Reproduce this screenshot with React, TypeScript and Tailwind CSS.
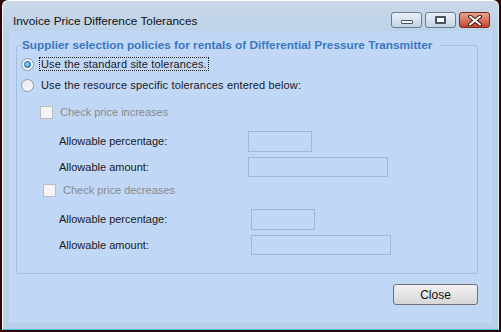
import React from 'react'

const font = { fontFamily: '"Liberation Sans", Arial, sans-serif' }

function Radio({ checked }: { checked?: boolean }) {
  return (
    <span className="flex h-[13px] w-[13px] items-center justify-center rounded-full border border-[#8e9bab] bg-gradient-to-br from-[#e8e8e8] to-[#fafafa]">
      {checked && (
        <span className="h-[7px] w-[7px] rounded-full border border-[#1b5fa6] bg-[radial-gradient(circle_at_40%_40%,#8fe0ff,#1c87d6)]" />
      )}
    </span>
  )
}

function Checkbox() {
  return <span className="block h-[13px] w-[13px] border border-[#bcbcbc] bg-[#f4f4f4]" />
}

function Field({ label, wide, shift }: { label: string; wide?: boolean; shift?: boolean }) {
  return (
    <div className="flex items-center">
      <span className="w-[231px] pl-[42px] text-[11px] text-[#1a1a1a]">{label}</span>
      <span
        className={
          'block border border-[#9abbe0] ' +
          (wide ? 'h-[20px] w-[140px]' : 'h-[21px] w-[64px]') +
          (shift ? ' ml-[3px]' : '')
        }
      />
    </div>
  )
}

export default function App() {
  return (
    <div className="h-[332px] w-[501px] bg-[#2d0707] px-[2px] pb-[2px]" style={font}>
      <div className="flex h-[330px] flex-col rounded-t-[6px] border-l border-r border-t border-b border-l-white border-r-[#e6eef8] border-t-white border-b-[#3fc6de] bg-gradient-to-b from-[#c9d8e8] to-[#b9d0ea] to-[40px]">
        {/* title bar */}
        <div className="flex h-[30px] items-start">
          <span className="ml-[10px] mt-[12px] text-[11.8px] leading-[16px] text-[#111]">
            Invoice Price Difference Tolerances
          </span>
          <div className="ml-auto mr-[8px] mt-[11px] flex gap-[3px]">
            <span className="flex h-[16px] w-[31px] items-end justify-center rounded-[3px] border border-[#6a7c93] bg-gradient-to-b from-[#e9f0f8] to-[#c3d3e6] pb-[3px]">
              <span className="block h-[4px] w-[12px] rounded-[1px] border border-[#46525e] bg-white" />
            </span>
            <span className="flex h-[16px] w-[31px] items-center justify-center rounded-[3px] border border-[#6a7c93] bg-gradient-to-b from-[#e9f0f8] to-[#c3d3e6]">
              <span className="block h-[8px] w-[11px] rounded-[1px] border-2 border-[#46525e] bg-white" />
            </span>
            <span className="flex h-[16px] w-[31px] items-center justify-center rounded-[3px] border border-[#7a2a1e] bg-gradient-to-b from-[#e8a493] to-[#c4412a]">
              <svg width="14" height="11" viewBox="0 0 14 11">
                <path d="M2 1.5 L12 9.5 M12 1.5 L2 9.5" stroke="#3b1a14" strokeWidth="4" strokeLinecap="round" />
                <path d="M2 1.5 L12 9.5 M12 1.5 L2 9.5" stroke="#fff" strokeWidth="2" strokeLinecap="round" />
              </svg>
            </span>
          </div>
        </div>

        {/* client area */}
        <div className="mx-[6px] mb-[6px] flex flex-1 flex-col bg-[#c1d7f6] pl-[7px] pr-[14px] pt-[6px]">
          <fieldset className="rounded-[3px] border border-[#a3c0e3] pb-[18px]">
            <legend className="ml-[5px] pr-[8px] text-[11.8px] font-bold leading-[16px] text-[#3b77bf]">
              Supplier selection policies for rentals of Differential Pressure Transmitter
            </legend>
            <div className="mt-[3px] flex flex-col text-[11px] text-[#1a1a1a]">
              <div className="flex h-[16px] items-center pl-[4px] tracking-[0.15px]">
                <Radio checked />
                <span className="ml-[5px] border border-dotted border-[#222] px-[1px] leading-[12px]">
                  Use the standard site tolerances.
                </span>
              </div>
              <div className="mt-[5px] flex h-[16px] items-center pl-[4px] tracking-[0.15px]">
                <Radio />
                <span className="ml-[7px]">Use the resource specific tolerances entered below:</span>
              </div>
              <div className="mt-[11px] flex h-[16px] items-center pl-[23px] text-[#8a8a8a]">
                <Checkbox />
                <span className="ml-[7px]">Check price increases</span>
              </div>
              <div className="mt-[11px]">
                <Field label="Allowable percentage:" />
              </div>
              <div className="mt-[5px]">
                <Field label="Allowable amount:" wide />
              </div>
              <div className="mt-[5px] flex h-[16px] items-center pl-[26px] text-[#8a8a8a]">
                <Checkbox />
                <span className="ml-[7px]">Check price decreases</span>
              </div>
              <div className="mt-[11px]">
                <Field label="Allowable percentage:" shift />
              </div>
              <div className="mt-[5px]">
                <Field label="Allowable amount:" wide shift />
              </div>
            </div>
          </fieldset>

          <div className="mt-[10px] flex justify-end">
            <button className="h-[21px] w-[85px] rounded-[3px] border border-[#707070] bg-gradient-to-b from-[#f2f2f2] to-[#d6d6d6] text-[12px] text-[#111]">
              Close
            </button>
          </div>
        </div>
      </div>
    </div>
  )
}
